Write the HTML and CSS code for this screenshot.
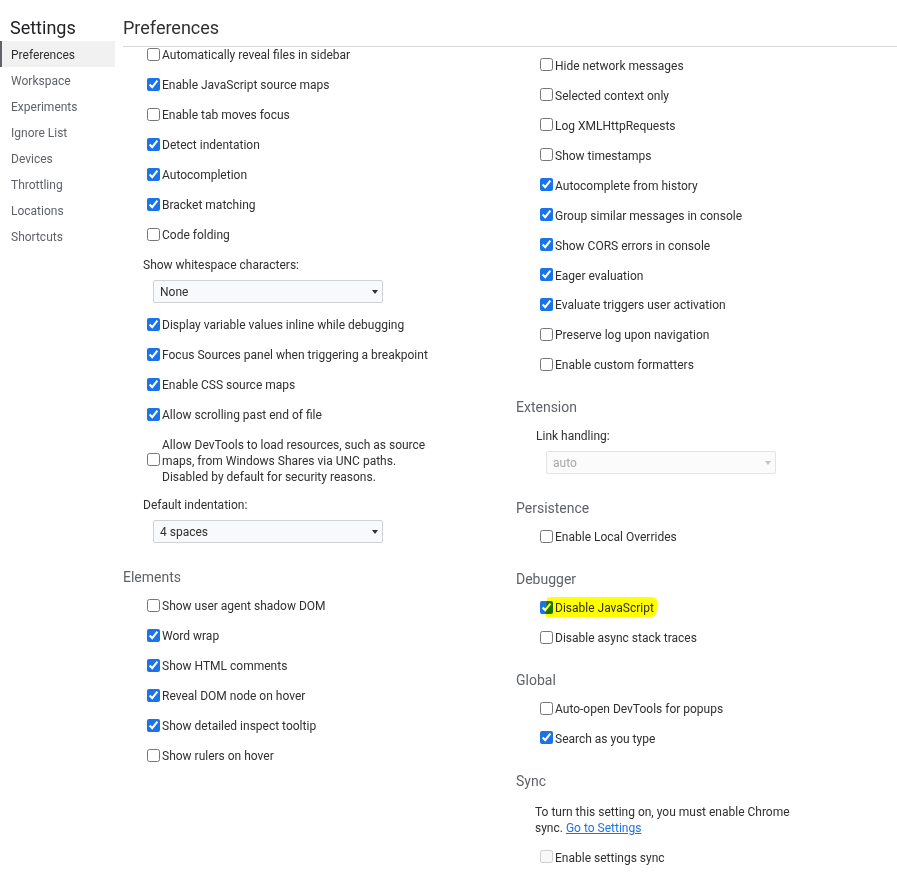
FILE: index.html
```html
<!DOCTYPE html>
<html>
<head>
<meta charset="utf-8">
<link rel="stylesheet" href="styles.css">
</head>
<body>
<div class="app">
  <nav class="sidebar">
    <div class="sidebar-title">Settings</div>
    <div class="nav-item selected">Preferences</div>
    <div class="nav-item">Workspace</div>
    <div class="nav-item">Experiments</div>
    <div class="nav-item">Ignore List</div>
    <div class="nav-item">Devices</div>
    <div class="nav-item">Throttling</div>
    <div class="nav-item">Locations</div>
    <div class="nav-item">Shortcuts</div>
  </nav>
  <main class="main">
    <div class="main-header">Preferences</div>
    <div class="content">
      <div class="column col-left">
        <label class="row"><input type="checkbox"><span>Automatically reveal files in sidebar</span></label>
        <label class="row"><input type="checkbox" checked><span>Enable JavaScript source maps</span></label>
        <label class="row"><input type="checkbox"><span>Enable tab moves focus</span></label>
        <label class="row"><input type="checkbox" checked><span>Detect indentation</span></label>
        <label class="row"><input type="checkbox" checked><span>Autocompletion</span></label>
        <label class="row"><input type="checkbox" checked><span>Bracket matching</span></label>
        <label class="row"><input type="checkbox"><span>Code folding</span></label>
        <div class="field-label">Show whitespace characters:</div>
        <div class="select"><span>None</span><i class="arrow"></i></div>
        <label class="row"><input type="checkbox" checked><span>Display variable values inline while debugging</span></label>
        <label class="row"><input type="checkbox" checked><span>Focus Sources panel when triggering a breakpoint</span></label>
        <label class="row"><input type="checkbox" checked><span>Enable CSS source maps</span></label>
        <label class="row"><input type="checkbox" checked><span>Allow scrolling past end of file</span></label>
        <label class="row multi"><input type="checkbox"><span>Allow DevTools to load resources, such as source<br>maps, from Windows Shares via UNC paths.<br>Disabled by default for security reasons.</span></label>
        <div class="field-label">Default indentation:</div>
        <div class="select"><span>4 spaces</span><i class="arrow"></i></div>
        <div class="section-title">Elements</div>
        <label class="row"><input type="checkbox"><span>Show user agent shadow DOM</span></label>
        <label class="row"><input type="checkbox" checked><span>Word wrap</span></label>
        <label class="row"><input type="checkbox" checked><span>Show HTML comments</span></label>
        <label class="row"><input type="checkbox" checked><span>Reveal DOM node on hover</span></label>
        <label class="row"><input type="checkbox" checked><span>Show detailed inspect tooltip</span></label>
        <label class="row"><input type="checkbox"><span>Show rulers on hover</span></label>
      </div>
      <div class="column col-right">
        <label class="row"><input type="checkbox"><span>Hide network messages</span></label>
        <label class="row"><input type="checkbox"><span>Selected context only</span></label>
        <label class="row"><input type="checkbox"><span>Log XMLHttpRequests</span></label>
        <label class="row"><input type="checkbox"><span>Show timestamps</span></label>
        <label class="row"><input type="checkbox" checked><span>Autocomplete from history</span></label>
        <label class="row"><input type="checkbox" checked><span>Group similar messages in console</span></label>
        <label class="row"><input type="checkbox" checked><span>Show CORS errors in console</span></label>
        <label class="row"><input type="checkbox" checked><span>Eager evaluation</span></label>
        <label class="row"><input type="checkbox" checked><span>Evaluate triggers user activation</span></label>
        <label class="row"><input type="checkbox"><span>Preserve log upon navigation</span></label>
        <label class="row"><input type="checkbox"><span>Enable custom formatters</span></label>
        <div class="section-title">Extension</div>
        <div class="field-label">Link handling:</div>
        <div class="select disabled"><span>auto</span><i class="arrow"></i></div>
        <div class="section-title">Persistence</div>
        <label class="row"><input type="checkbox"><span>Enable Local Overrides</span></label>
        <div class="section-title">Debugger</div>
        <label class="row highlighted"><input type="checkbox" checked><span>Disable JavaScript</span><i class="marker"></i></label>
        <label class="row"><input type="checkbox"><span>Disable async stack traces</span></label>
        <div class="section-title">Global</div>
        <label class="row"><input type="checkbox"><span>Auto-open DevTools for popups</span></label>
        <label class="row"><input type="checkbox" checked><span>Search as you type</span></label>
        <div class="section-title">Sync</div>
        <p class="sync-text">To turn this setting on, you must enable Chrome<br>sync. <a href="#" class="link">Go to Settings</a></p>
        <label class="row"><input type="checkbox" disabled><span>Enable settings sync</span></label>
      </div>
    </div>
  </main>
</div>
</body>
</html>
```
FILE: styles.css
```css
html, body {
  margin: 0;
  padding: 0;
  background: #ffffff;
}
body {
  font-family: Roboto, "Noto Sans", "Liberation Sans", sans-serif;
  font-size: 12px;
  color: #303030;
}
.app {
  display: flex;
  height: 872px;
  overflow: hidden;
}
.sidebar {
  width: 115px;
  flex: none;
}
.sidebar-title {
  padding: 16px 0 0 10px;
  height: 24px;
  line-height: 24px;
  font-size: 18px;
  color: #202124;
  margin-bottom: 1px;
}
.nav-item {
  height: 25px;
  padding-top: 1px;
  line-height: 26px;
  padding-left: 11px;
  color: #5f6368;
}
.nav-item.selected {
  background: #f1f1f1;
  color: #303030;
  box-shadow: inset 2px 0 0 #5f6368;
}
.main {
  flex: 1;
  padding-left: 8px;
  display: flex;
  flex-direction: column;
  min-width: 0;
}
.main-header {
  padding: 16px 0 6px 0;
  height: 24px;
  line-height: 24px;
  font-size: 18px;
  color: #303030;
  border-bottom: 1px solid #d6d6d6;
}
.content {
  display: flex;
  flex: 1;
  overflow: hidden;
}
.column {
  width: 393px;
  flex: none;
  display: flex;
  flex-direction: column;
}
.col-left {
  margin-top: -8px;
}
.col-right {
  margin-top: 3px;
}
.row {
  display: flex;
  align-items: center;
  height: 30px;
  padding-left: 24px;
  position: relative;
}
.row span {
  padding-top: 2px;
}
.row input {
  margin: 0 2px 0 0;
  width: 13px;
  height: 13px;
  accent-color: #1a73e8;
  flex: none;
}
.row.multi {
  height: auto;
  padding-top: 6px;
  padding-bottom: 6px;
  line-height: 16px;
}
.row.multi span {
  padding-top: 0;
  margin-top: 2px;
  margin-bottom: -2px;
}
.field-label {
  height: 29px;
  padding-top: 1px;
  line-height: 30px;
  padding-left: 20px;
}
.select {
  margin: 1px 0 6px 30px;
  height: 21px;
  border: 1px solid #cfd1d4;
  border-radius: 2px;
  background: #f8f9fa;
  display: flex;
  align-items: center;
  justify-content: space-between;
  padding: 0 4px 0 6px;
  box-sizing: content-box;
  width: 218px;
}
.select span {
  padding-top: 1px;
}
.arrow {
  width: 0;
  height: 0;
  border-left: 3.5px solid transparent;
  border-right: 3.5px solid transparent;
  border-top: 4px solid #303030;
}
.select.disabled {
  border-color: #e4e4e4;
  background: #fbfbfb;
  color: #a8a8a8;
}
.select.disabled .arrow {
  border-top-color: #c4c4c4;
}
.section-title {
  margin: 16px 0 5px 0;
  height: 18px;
  padding-top: 2px;
  line-height: 20px;
  font-size: 14px;
  color: #5f6368;
}
.sync-text {
  margin: 10px 0 6px 0;
  padding-left: 19px;
  line-height: 16px;
}
.link {
  color: #1a73e8;
  text-decoration: underline;
}
.marker {
  position: absolute;
  left: 30px;
  top: 5px;
  width: 111px;
  height: 20px;
  background: #ffff00;
  mix-blend-mode: multiply;
  border-radius: 3px 6px 5px 2px;
  transform: skewX(-6deg);
}
```
